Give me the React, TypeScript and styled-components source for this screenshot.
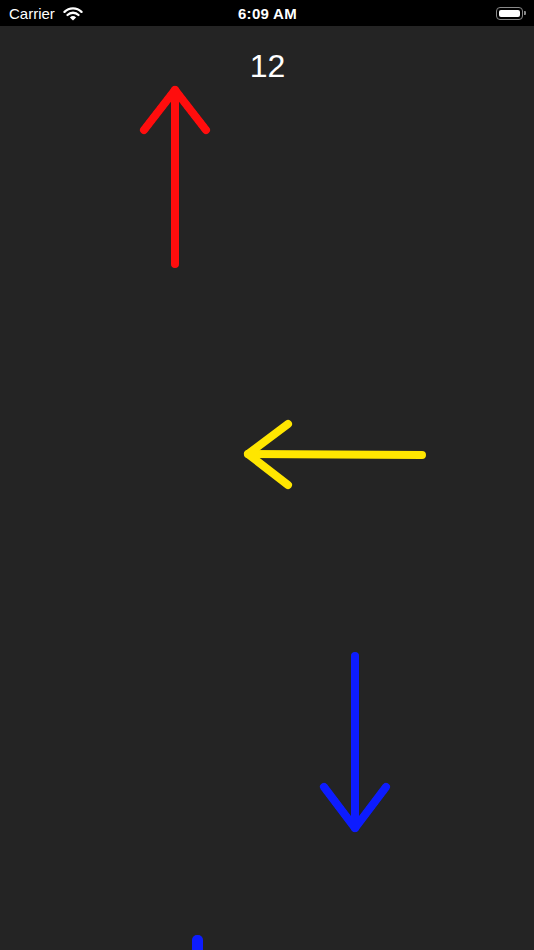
import styled, { createGlobalStyle } from "styled-components";

const GlobalStyle = createGlobalStyle`
    html, body {
        margin: 0;
        padding: 0;
        background: #242424;
    }
    body {
        font-family: "Liberation Sans", Arial, sans-serif;
    }
`;

interface ArrowSpec {
    id: string;
    color: string;
    line: [number, number, number, number];
    head: [number, number, number, number, number, number];
}

// coordinates are relative to the game field (below the status bar)
const arrows: ArrowSpec[] = [
    { id: "up", color: "#ff0a0a", line: [175, 64, 175, 238], head: [144, 104, 175, 64, 206, 104] },
    { id: "left", color: "#ffe600", line: [248, 428, 422, 429], head: [288, 398, 248, 428, 288, 459] },
    { id: "down", color: "#0a1eff", line: [355, 630, 355, 802], head: [324, 761, 355, 802, 386, 761] },
];

export default function App() {
    return (
        <Screen>
            <GlobalStyle />
            <StatusBar>
                <Carrier>
                    Carrier
                    <WifiIcon />
                </Carrier>
                <Clock>6:09 AM</Clock>
                <Battery>
                    <BatteryBody>
                        <BatteryFill />
                    </BatteryBody>
                    <BatteryCap />
                </Battery>
            </StatusBar>
            <Field>
                <Score>12</Score>
                <Canvas viewBox="0 0 534 924" width={534} height={924}>
                    <defs>
                        <filter id="soft" x="-20%" y="-20%" width="140%" height="140%">
                            <feGaussianBlur stdDeviation="0.7" />
                        </filter>
                    </defs>
                    {arrows.map((a) => (
                        <g key={a.id} stroke={a.color} strokeWidth={8} strokeLinecap="round" strokeLinejoin="round" fill="none" filter="url(#soft)">
                            <line x1={a.line[0]} y1={a.line[1]} x2={a.line[2]} y2={a.line[3]} />
                            <polyline points={`${a.head[0]},${a.head[1]} ${a.head[2]},${a.head[3]} ${a.head[4]},${a.head[5]}`} />
                        </g>
                    ))}
                    <rect x={192} y={909} width={11} height={20} rx={5} fill="#0a1eff" filter="url(#soft)" />
                </Canvas>
            </Field>
        </Screen>
    );
}

const WifiIcon = () => (
    <svg width="20" height="14" viewBox="0 0 20 14">
        <path d="M10 13.6 L6.9 10.4 A4.5 4.5 0 0 1 13.1 10.4 Z" fill="#fff" />
        <path d="M4.5 8 A7.8 7.8 0 0 1 15.5 8" stroke="#fff" strokeWidth="2.3" fill="none" strokeLinecap="round" />
        <path d="M1.5 4.9 A12 12 0 0 1 18.5 4.9" stroke="#fff" strokeWidth="2.3" fill="none" strokeLinecap="round" />
    </svg>
);

const Screen = styled.div`
    width: 534px;
    height: 950px;
    overflow: hidden;
    display: flex;
    flex-direction: column;
    background: #242424;
`;

const StatusBar = styled.div`
    height: 26px;
    background: #000;
    color: #fff;
    display: grid;
    grid-template-columns: 1fr auto 1fr;
    align-items: center;
    padding: 0 8px 0 9px;
    font-size: 15px;
`;

const Carrier = styled.div`
    display: flex;
    align-items: center;
    gap: 8px;
    margin-top: 1px;
`;

const Clock = styled.div`
    font-weight: bold;
    margin-top: 1px;
    letter-spacing: 0.3px;
`;

const Battery = styled.div`
    justify-self: end;
    display: flex;
    align-items: center;
    gap: 1px;
`;

const BatteryBody = styled.div`
    width: 27px;
    height: 13px;
    border: 1px solid #8a8a8a;
    border-radius: 4px;
    padding: 2px;
    box-sizing: border-box;
    display: flex;
`;

const BatteryFill = styled.div`
    flex: 1;
    background: #fff;
    border-radius: 2px;
`;

const BatteryCap = styled.div`
    width: 2px;
    height: 4px;
    background: #8a8a8a;
    border-radius: 0 1px 1px 0;
`;

const Field = styled.div`
    position: relative;
    flex: 1;
    display: flex;
    flex-direction: column;
    align-items: center;
`;

const Score = styled.div`
    margin-top: 22px;
    color: #fff;
    font-family: "Liberation Sans", Arial, sans-serif;
    font-size: 32px;
    line-height: 36px;
    padding-left: 1px;
`;

const Canvas = styled.svg`
    position: absolute;
    left: 0;
    top: 0;
`;
